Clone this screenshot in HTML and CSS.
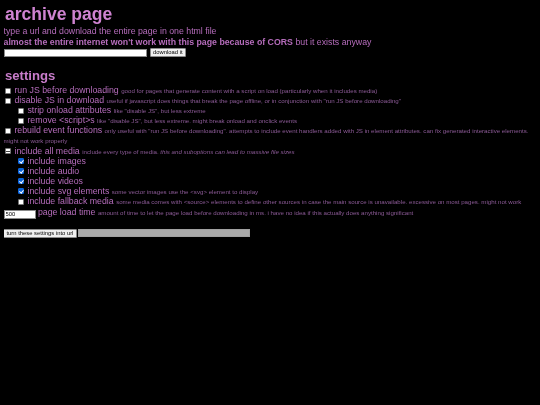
FILE: index.html
```html
<!DOCTYPE html>
<html lang="en">
<head>
  <meta charset="UTF-8">
  <title>archive page</title>
  <link rel="stylesheet" href="styles.css">
</head>
<body>
  <h1 class="title">archive page</h1>
  <p class="intro">type a url and download the entire page in one html file</p>
  <p class="intro"><b>almost the entire internet won't work with this page because of CORS</b> but it exists anyway</p>
  <div class="url__row">
    <input class="url__input" type="text">
    <button class="btn">download it</button>
  </div>

  <h2 class="settings__title">settings</h2>
  <div class="option">
    <input class="check" type="checkbox">
    <label>run JS before downloading</label>
    <small>good for pages that generate content with a script on load (particularly when it includes media)</small>
  </div>
  <div class="option">
    <input class="check" type="checkbox">
    <label>disable JS in download</label>
    <small>useful if javascript does things that break the page offline, or in conjunction with "run JS before downloading"</small>
  </div>
  <div class="option option--sub">
    <input class="check" type="checkbox">
    <label>strip onload attributes</label>
    <small>like "disable JS", but less extreme</small>
  </div>
  <div class="option option--sub">
    <input class="check" type="checkbox">
    <label>remove &lt;script&gt;s</label>
    <small>like "disable JS", but less extreme. might break onload and onclick events</small>
  </div>
  <div class="option">
    <input class="check" type="checkbox">
    <label>rebuild event functions</label>
    <small>only useful with "run JS before downloading". attempts to include event handlers added with JS in element attributes. can fix generated interactive elements.</small><br>
    <small>might not work properly</small>
  </div>
  <div class="option">
    <input class="check check--mixed" type="checkbox">
    <label>include all media</label>
    <small>include every type of media. <i>this and suboptions can lead to massive file sizes</i></small>
  </div>
  <div class="option option--sub">
    <input class="check" type="checkbox" checked>
    <label>include images</label>
  </div>
  <div class="option option--sub">
    <input class="check" type="checkbox" checked>
    <label>include audio</label>
  </div>
  <div class="option option--sub">
    <input class="check" type="checkbox" checked>
    <label>include videos</label>
  </div>
  <div class="option option--sub">
    <input class="check" type="checkbox" checked>
    <label>include svg elements</label>
    <small>some vector images use the &lt;svg&gt; element to display</small>
  </div>
  <div class="option option--sub">
    <input class="check" type="checkbox">
    <label>include fallback media</label>
    <small>some media comes with &lt;source&gt; elements to define other sources in case the main source is unavailable. excessive on most pages. might not work</small>
  </div>
  <div class="option option--load">
    <input class="load__input" type="text" value="500">
    <label>page load time</label>
    <small>amount of time to let the page load before downloading in ms. i have no idea if this actually does anything significant</small>
  </div>

  <div class="share__row">
    <button class="btn btn--share">turn these settings into url</button>
    <input class="share__output" type="text" disabled>
  </div>
  <script>
    document.querySelector('.check--mixed').classList.add('_mixed')
  </script>
</body>
</html>
```
FILE: styles.css
```css
body {
  margin: 0 3.5px;
  background: #000;
  color: #b56cbb;
  font-family: "Liberation Sans", Arial, sans-serif;
  font-size: 8.77px;
  line-height: 10.1px;
  filter: blur(0.3px);
}

.title {
  margin: 0 0 2px 1.5px;
  padding-top: 4px;
  font-size: 17.55px;
  line-height: 20px;
  color: #cf83d1;
}

.intro {
  margin: 0;
  line-height: 10.5px;
}

.url__row {
  display: flex;
  align-items: center;
  gap: 3px;
  margin-top: 1px;
}

.url__input {
  box-sizing: border-box;
  width: 143px;
  height: 8px;
  margin: 0;
  padding: 0;
  border: 1px solid #8a8a8a;
  background: #fff;
}

.btn {
  box-sizing: border-box;
  height: 9px;
  margin: 0;
  padding: 0 2.5px;
  border: 1px solid #8a8a8a;
  border-radius: 1px;
  background: #efefef;
  color: #000;
  font-family: inherit;
  font-size: 5.85px;
  line-height: 7px;
}

.btn--share {
  margin-left: -0.5px;
}

.settings__title {
  margin: 11px 0 1px 1.5px;
  font-size: 13.15px;
  line-height: 16px;
  color: #c87cca;
}

.option {
  min-height: 10.1px;
}

.option--sub {
  padding-left: 13px;
}

.option--load {
  margin-top: 1px;
}

.check {
  appearance: none;
  position: relative;
  box-sizing: border-box;
  display: inline-block;
  width: 6px;
  height: 6px;
  margin: 0 1px 0 1.5px;
  border: 1px solid #777;
  border-radius: 1px;
  background: #fff;
  vertical-align: -0.5px;
}

.check:checked {
  border-color: #0b63d9;
  background: #0b63d9;
}

.check:checked::after {
  content: "";
  position: absolute;
  left: 1px;
  top: 0;
  width: 1.5px;
  height: 3px;
  border: solid #fff;
  border-width: 0 1px 1px 0;
  transform: rotate(40deg);
}

.check._mixed::after {
  content: "";
  position: absolute;
  left: 0;
  top: 1.5px;
  width: 4px;
  height: 1px;
  background: #444;
}

small {
  font-size: 6.15px;
  line-height: 1;
  color: #8d5b98;
}

.load__input {
  box-sizing: border-box;
  width: 32px;
  height: 9px;
  margin: 0;
  padding: 0 1px;
  border: 1px solid #8a8a8a;
  background: #fff;
  color: #000;
  font-family: inherit;
  font-size: 5.85px;
  vertical-align: -1px;
}

.share__row {
  display: flex;
  align-items: center;
  gap: 1.5px;
  margin-top: 10px;
}

.share__output {
  box-sizing: border-box;
  width: 172px;
  height: 8px;
  margin: 0;
  padding: 0;
  border: 1px solid #a0a0a0;
  background: #aaa;
}
```
